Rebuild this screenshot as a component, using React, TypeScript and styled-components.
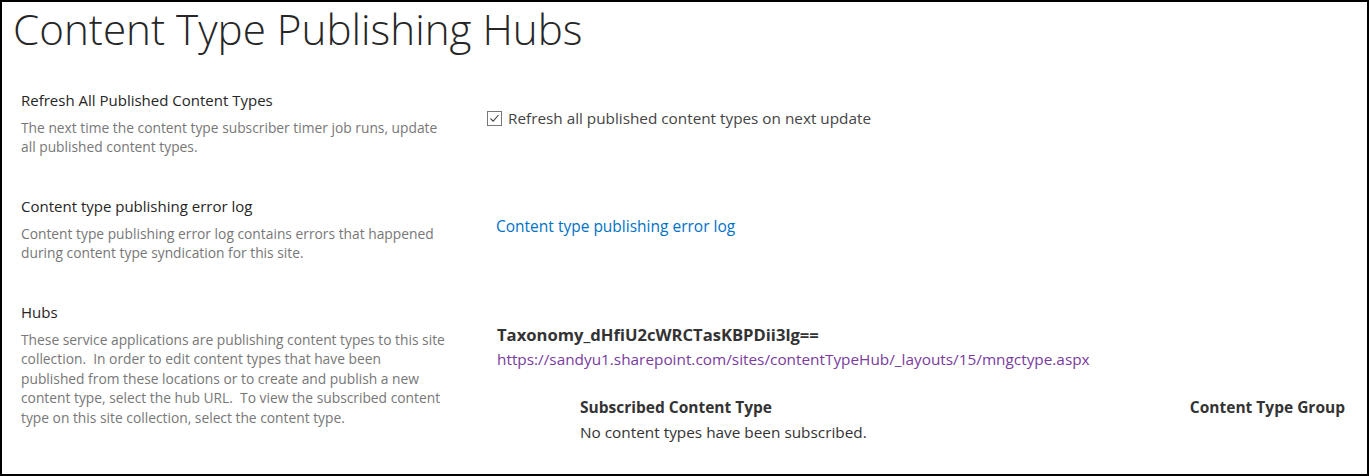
import React from "react";
import styled, { createGlobalStyle } from "styled-components";

const Global = createGlobalStyle`
  html, body { margin: 0; padding: 0; background: #fff; }
  body { font-family: "Open Sans", "Noto Sans", Arial, sans-serif; }
`;

const Frame = styled.div`
  width: 1369px;
  height: 476px;
  box-sizing: border-box;
  border: 2px solid #000;
  overflow: hidden;
  padding: 0 0 0 10px;
`;

const Title = styled.h1`
  margin: 0;
  padding-left: 1px;
  font-weight: 300;
  font-size: 42.2px;
  line-height: 54px;
  color: #262626;
  white-space: nowrap;
`;

const Section = styled.div<{ $h: number }>`
  display: grid;
  grid-template-columns: 467px 1fr;
  height: ${(p) => p.$h}px;
`;

const Left = styled.div<{ $top: number }>`
  padding-left: 9px;
  padding-top: ${(p) => p.$top}px;
`;

const Right = styled.div<{ $top: number; $left?: number }>`
  padding-top: ${(p) => p.$top}px;
  padding-left: ${(p) => p.$left ?? 0}px;
  font-size: 15.4px;
  color: #444;
`;

const Heading = styled.div`
  font-size: 15px;
  line-height: 20px;
  color: #262626;
  white-space: nowrap;
`;

const Desc = styled.div`
  margin-top: 8px;
  font-size: 13.8px;
  line-height: 19.4px;
  color: #777;
  white-space: nowrap;
`;

const CheckRow = styled.label`
  display: flex;
  align-items: center;
  gap: 6px;
  font-size: 15.3px;
  line-height: 20px;
  color: #444;
  white-space: nowrap;
`;

const Box = styled.span`
  width: 13px;
  height: 13px;
  border: 1px solid #777;
  display: inline-flex;
  align-items: center;
  justify-content: center;
  background: #fff;
`;

const Link = styled.a<{ $visited?: boolean }>`
  display: block;
  color: ${(p) => (p.$visited ? "#7a3b9e" : "#0072c6")};
  text-decoration: none;
  font-size: ${(p) => (p.$visited ? 15.35 : 15.5)}px;
  line-height: 24px;
  white-space: nowrap;
`;

const HubName = styled.div`
  font-weight: 700;
  font-size: 16.6px;
  line-height: 24px;
  color: #333;
  white-space: nowrap;
`;

const Table = styled.div`
  margin-top: 26px;
  margin-left: 83px;
  margin-right: 22px;
  display: grid;
  grid-template-columns: 1fr auto;
  row-gap: 5px;
`;

const Th = styled.div`
  font-weight: 700;
  font-size: 15.5px;
  line-height: 20px;
  color: #333;
  white-space: nowrap;
`;

const Td = styled.div`
  font-size: 15.35px;
  line-height: 20px;
  color: #333;
  white-space: nowrap;
`;

export default function App() {
  return (
    <>
      <Global />
      <Frame>
        <Title>Content Type Publishing Hubs</Title>
        <Section $h={107}>
          <Left $top={34}>
            <Heading>Refresh All Published Content Types</Heading>
            <Desc>
              The next time the content type subscriber timer job runs, update
              <br />
              all published content types.
            </Desc>
          </Left>
          <Right $top={52} $left={8}>
            <CheckRow>
              <Box>
                <svg width="11" height="11" viewBox="0 0 11 11">
                  <path d="M1.5 5.5 L4.2 8.2 L9.5 2" fill="none" stroke="#444" strokeWidth="1.1" />
                </svg>
              </Box>
              Refresh all published content types on next update
            </CheckRow>
          </Right>
        </Section>
        <Section $h={106}>
          <Left $top={33}>
            <Heading>Content type publishing error log</Heading>
            <Desc>
              Content type publishing error log contains errors that happened
              <br />
              during content type syndication for this site.
            </Desc>
          </Left>
          <Right $top={51} $left={17}>
            <Link href="#">Content type publishing error log</Link>
          </Right>
        </Section>
        <Section $h={160}>
          <Left $top={33}>
            <Heading>Hubs</Heading>
            <Desc>
              These service applications are publishing content types to this site
              <br />
              collection.&nbsp; In order to edit content types that have been
              <br />
              published from these locations or to create and publish a new
              <br />
              content type, select the hub URL.&nbsp; To view the subscribed content
              <br />
              type on this site collection, select the content type.
            </Desc>
          </Left>
          <Right $top={54} $left={18}>
            <HubName>Taxonomy_dHfiU2cWRCTasKBPDii3lg==</HubName>
            <Link href="#" $visited>
              https://sandyu1.sharepoint.com/sites/contentTypeHub/_layouts/15/mngctype.aspx
            </Link>
            <Table>
              <Th>Subscribed Content Type</Th>
              <Th>Content Type Group</Th>
              <Td>No content types have been subscribed.</Td>
              <Td />
            </Table>
          </Right>
        </Section>
      </Frame>
    </>
  );
}
